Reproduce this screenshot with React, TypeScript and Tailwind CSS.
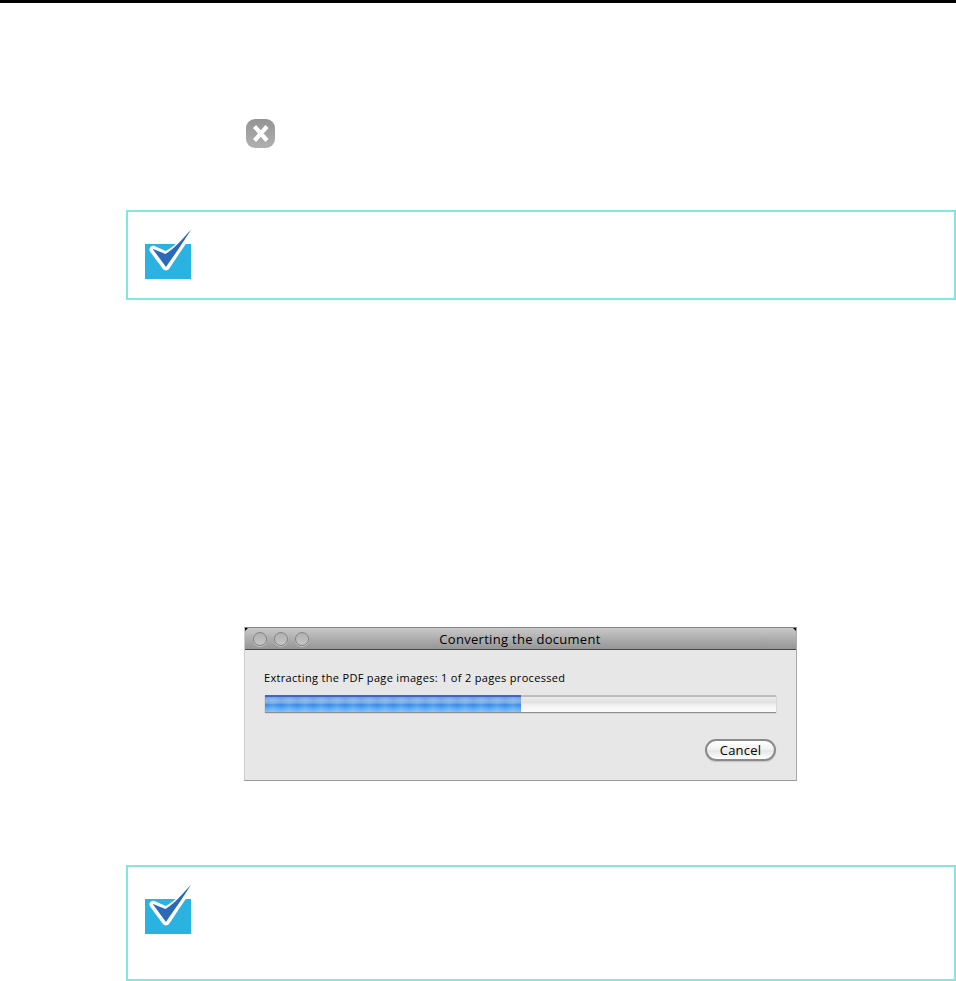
const LIGHTS = ['close', 'minimize', 'zoom'];

function CheckIcon() {
  return (
    <svg width="48" height="50" viewBox="0 0 48 50" aria-hidden="true">
      <rect x="0" y="15" width="46" height="35" fill="#2ab3e0" />
      <path
        d="M46 1C37 9 30 17 20.800 22L9.500 17C6 15.800 3 19.500 5.200 22.800L17.800 39.700C19.500 42 22.500 42 24.200 39.700C31.500 29 37 20 43 12Z"
        fill="#fff"
      />
      <path d="M46 0.800C37 10.500 29.500 19.500 20.500 25L7.500 19.800L21 38C28.500 27 36 17 46 0.800Z" fill="#2b6ab8" />
    </svg>
  );
}

function CloseIcon() {
  return (
    <svg width="30" height="30" viewBox="0 0 30 30" aria-hidden="true">
      <defs>
        <linearGradient id="close-fill" x1="0" y1="0" x2="0" y2="1">
          <stop offset="0" stopColor="#949494" />
          <stop offset="1" stopColor="#b0b0b0" />
        </linearGradient>
      </defs>
      <rect x="0" y="0" width="29" height="29" rx="9" fill="url(#close-fill)" />
      <path d="M8.500 7.500L21 21.500M21 7.500L8.500 21.500" stroke="#fff" strokeWidth="4.200" />
    </svg>
  );
}

function NoteBox({ className }: { className: string }) {
  return (
    <section className={`ml-[126px] border-2 border-[#80e8df] pl-[17px] pt-[17px] ${className}`}>
      <CheckIcon />
    </section>
  );
}

function ProgressBar({ percent }: { percent: number }) {
  return (
    <div className="h-[17px] w-[511px] border-t-2 border-[#bdbdbd] bg-[linear-gradient(180deg,#ededed_0%,#e0e0e0_35%,#f2f2f2_55%,#fcfcfc_100%)] shadow-[0_1px_1px_#8e8e8e]">
      <div
        className="relative -top-[2px] h-[17px] border-t-2 border-[#4163c4] bg-[repeating-linear-gradient(90deg,#ffffff00_0px,#c6e6ff33_8px,#ffffff00_16px),linear-gradient(180deg,#6799dc_0%,#84b2e6_20%,#74a8e4_40%,#3386e4_52%,#4b9ef2_68%,#74c4ff_100%)]"
        style={{ width: `${percent}%` }}
      />
    </div>
  );
}

function ConvertDialog() {
  return (
    <div className="relative ml-[244px] h-[154px] w-[553px] border border-b-[#999] border-l-[#ccc] border-r-[#aaa] border-t-[#858585] bg-[#e7e7e7]">
      {/* dark slivers outside the rounded title bar */}
      <span className="absolute left-0 top-0 size-[3px] bg-black [clip-path:polygon(0_0,100%_0,0_100%)]" />
      <span className="absolute right-0 top-0 size-[3px] bg-black [clip-path:polygon(0_0,100%_0,100%_100%)]" />
      <header className="grid h-[22px] grid-cols-[64px_1fr_64px] items-center border-b border-[#484848] bg-linear-to-b from-[#c8c8c8] to-[#969696]">
        <div className="flex gap-[7px] pl-2">
          {LIGHTS.map((name) => (
            <span
              key={name}
              className="size-[14px] rounded-full border border-[#858585] bg-linear-to-b from-[#b0b0b0] to-[#c6c6c6] shadow-[0_1px_0_#c3c3c3]"
            />
          ))}
        </div>
        <h1 className="-ml-px whitespace-nowrap text-center text-[13px] leading-[20px] tracking-[0.290px] text-black">
          Converting the document
        </h1>
      </header>
      <div className="pl-[19px] pt-[19px]">
        <p className="mb-[8px] whitespace-nowrap text-[11px] leading-[18px] tracking-[0.320px] text-black">
          Extracting the PDF page images: 1 of 2 pages processed
        </p>
        <div className="pl-px">
          <ProgressBar percent={50} />
        </div>
        <div className="mt-[27px] flex w-[512px] justify-end">
          <button className="h-[22px] w-[71px] rounded-full border-2 border-[#8a8a8a] bg-[linear-gradient(180deg,#fff_0%,#f2f2f2_45%,#e6e6e6_55%,#fff_100%)] text-[13px] leading-[18px] tracking-[0.200px] text-black shadow-[0_1px_1px_#c3c3c3]">
            Cancel
          </button>
        </div>
      </div>
    </div>
  );
}

export default function App() {
  return (
    <main className="h-[981px] w-[956px] overflow-hidden border-t-[3px] border-black bg-white font-['Open_Sans','Noto_Sans',sans-serif]">
      <div className="ml-[246px] h-[207px] pt-[116px]">
        <CloseIcon />
      </div>
      <NoteBox className="h-[90px]" />
      <div className="h-[565px] pt-[327px]">
        <ConvertDialog />
      </div>
      <NoteBox className="h-[116px]" />
    </main>
  );
}
